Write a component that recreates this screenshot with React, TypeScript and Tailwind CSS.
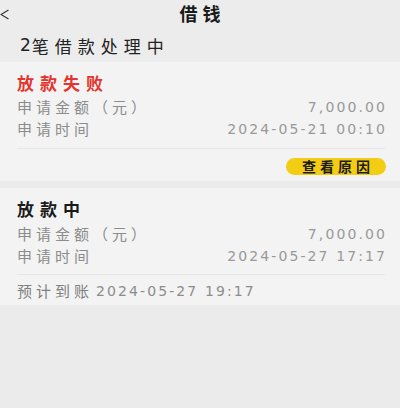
import React from "react";

const FONT = { fontFamily: '"Noto Sans CJK SC", sans-serif' };
const NUM = { fontFamily: '"DejaVu Sans", "Noto Sans CJK SC", sans-serif' };

function Row({ label, value }: { label: string; value: string }) {
  return (
    <div className="flex h-[22px] items-center justify-between leading-[22px] text-[#8c8c8c]">
      <span className="text-[15px] tracking-[4px]">{label}</span>
      <span className="text-[14px] tracking-[2.1px] text-[#999]" style={NUM}>
        {value}
      </span>
    </div>
  );
}

export default function App() {
  return (
    <div className="min-h-[408px] w-[400px] bg-[#ebebeb]" style={FONT}>
      {/* header */}
      <div className="relative flex h-[30px] items-center justify-center bg-[#ececec] pb-[3px]">
        <svg className="absolute left-0 top-[9px]" width="10" height="11" viewBox="0 0 10 11">
          <polyline points="8.5,1 1,5.5 8.5,10" fill="none" stroke="#333" strokeWidth="1.2" />
        </svg>
        <span className="pl-[5px] text-[18px] font-bold tracking-[5px] text-[#1a1a1a]">借钱</span>
      </div>

      {/* sub header */}
      <div className="flex h-[32px] items-center bg-[#ececec] pl-[20px] text-[17px] text-[#222]">
        <span className="mr-[1px]" style={NUM}>
          2
        </span>
        <span className="tracking-[6px]">笔借款处理中</span>
      </div>

      {/* card 1 */}
      <div className="bg-[#f3f3f3] pl-[17px] pr-[13px] pt-[10px] pb-[6px]">
        <div className="h-[22px] text-[17px] font-bold leading-[22px] tracking-[6px] text-[#e5332d]">放款失败</div>
        <div className="mt-[2px]">
          <Row label="申请金额（元）" value="7,000.00" />
          <Row label="申请时间" value="2024-05-21 00:10" />
        </div>
        <div className="mr-[2px] mt-[8px] h-px bg-[#e6e6e6]" />
        <div className="mt-[9px] flex justify-end pr-[1px]">
          <div className="flex h-[17px] w-[100px] items-center justify-center rounded-full bg-[#f2cd14] pl-[4px] text-[14px] font-bold tracking-[4px] text-[#1a1a1a]">
            查看原因
          </div>
        </div>
      </div>

      {/* card 2 */}
      <div className="mt-[7px] bg-[#f3f3f3] pl-[17px] pr-[13px] pt-[10px] pb-[3px]">
        <div className="h-[22px] text-[17px] font-bold leading-[22px] tracking-[6px] text-[#1a1a1a]">放款中</div>
        <div className="mt-[3px]">
          <Row label="申请金额（元）" value="7,000.00" />
          <Row label="申请时间" value="2024-05-27 17:17" />
        </div>
        <div className="mr-[2px] mt-[7px] h-px bg-[#e6e6e6]" />
        <div className="mt-[5px] flex h-[22px] items-center leading-[22px] text-[#808080]">
          <span className="text-[15px] tracking-[4px]">预计到账</span>
          <span className="ml-[3px] text-[14px] tracking-[2.1px] text-[#8c8c8c]" style={NUM}>
            2024-05-27 19:17
          </span>
        </div>
      </div>
    </div>
  );
}
